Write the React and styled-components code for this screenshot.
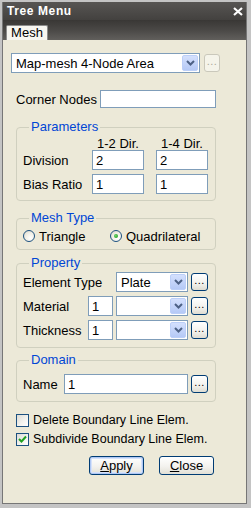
import React from 'react';
import styled, {createGlobalStyle} from "styled-components";

const GlobalStyle = createGlobalStyle`
  html, body {
    margin: 0;
    padding: 0;
    background: #c4c4c4;
  }
  body {
    font-family: "Liberation Sans", Arial, sans-serif;
    font-size: 13px;
    color: #000;
  }
`;

const Frame = styled.div `
  width: 251px;
  height: 508px;
  box-sizing: border-box;
  padding: 2px 4px 4px 2px;
  background: #c4c4c4;
  display: flex;
`;

const Window = styled.div `
  flex: 1;
  display: flex;
  flex-direction: column;
  border: 1px solid #767676;
  border-top: none;
`;

const TitleBar = styled.div `
  height: 18px;
  display: flex;
  align-items: center;
  justify-content: space-between;
  padding: 0 3px 0 4px;
  background: linear-gradient(180deg, #575553 0%, #43413f 100%);
  color: white;
  font-weight: bold;
  font-size: 12px;
  letter-spacing: 0.6px;
`;

const TabStrip = styled.div `
  height: 20px;
  display: flex;
  align-items: flex-end;
  padding-left: 3px;
  background: linear-gradient(180deg, #393735 0%, #4a4846 50%, #615f5c 100%);
`;

const Tab = styled.div `
  width: 42px;
  height: 15px;
  box-sizing: border-box;
  background: #f7f6f1;
  border: 1px solid #8c8c8c;
  border-bottom: none;
  border-radius: 2px 2px 0 0;
  font-size: 13px;
  line-height: 14px;
  text-align: center;
`;

const Body = styled.div `
  flex: 1;
  background: #ece9d8;
  padding: 13px 0 0 8px;
  display: flex;
  flex-direction: column;
`;

const Row = styled.div `
  display: flex;
  align-items: center;
  gap: ${p => p.$gap || 0}px;
`;

const Section = styled.div `
  width: 200px;
  margin-left: 5px;
  display: flex;
  flex-direction: column;
`;

const CornerRow = styled.div `
  margin-top: 17px;
  height: 18px;
  display: flex;
  align-items: center;
  justify-content: space-between;
`;

const Combo = styled.div `
  width: ${p => p.$w}px;
  height: 20px;
  box-sizing: border-box;
  border: 1px solid #7f9db9;
  background: white;
  padding: 1px;
  display: flex;
  align-items: center;
  justify-content: space-between;
`;

const ComboText = styled.span `
  padding-left: 3px;
  white-space: nowrap;
`;

const ArrowBox = styled.div `
  width: 16px;
  height: 16px;
  box-sizing: border-box;
  border: 1px solid #bccff8;
  border-radius: 2px;
  background: linear-gradient(180deg, #d4e0fd 0%, #b5c9f6 100%);
  display: flex;
  align-items: center;
  justify-content: center;
`;

const DotButton = styled.div `
  width: ${p => p.$w || 17}px;
  height: 18px;
  box-sizing: border-box;
  border: 1px solid ${p => p.$disabled ? '#cac8bb' : '#003c74'};
  border-radius: 3px;
  background: ${p => p.$disabled ? '#f5f4ea' : 'linear-gradient(180deg, #ffffff 0%, #f2f1ec 60%, #dedcd2 100%)'};
  color: ${p => p.$disabled ? '#aca899' : '#000'};
  font-size: 11px;
  line-height: 13px;
  text-align: center;
  letter-spacing: 0.5px;
`;

const Input = styled.input `
  width: ${p => p.$w}px;
  height: ${p => p.$h || 20}px;
  box-sizing: border-box;
  margin: 0;
  border: 1px solid #7f9db9;
  background: white;
  padding: 0 3px;
  font-family: "Liberation Sans", Arial, sans-serif;
  font-size: 13px;
  color: #000;
  outline: none;
`;

const Group = styled.fieldset `
  margin: ${p => p.$mt}px 0 0 0;
  padding: ${p => p.$pad};
  border: 1px solid #d0d0bf;
  border-radius: 4px;
  min-width: 0;
  width: 200px;
  box-sizing: border-box;
`;

const Legend = styled.legend `
  margin-left: 6px;
  padding: 0 2px;
  color: #0046d5;
  font-size: 13px;
  line-height: 14px;
`;

const ParamGrid = styled.div `
  display: grid;
  grid-template-columns: 57px 52px 52px;
  grid-template-rows: 11px 20px 20px;
  column-gap: 12px;
  row-gap: 4px;
  align-items: center;
`;

const ColHead = styled.div `
  margin-top: 2px;
  text-align: center;
  font-size: 13px;
  line-height: 14px;
  align-self: start;
  white-space: nowrap;
`;

const Label = styled.span `
  white-space: nowrap;
  grid-column: ${p => p.$span || 'auto'};
`;

const PropGrid = styled.div `
  display: grid;
  grid-template-columns: ${p => p.$cols};
  grid-auto-rows: 20px;
  column-gap: 3px;
  row-gap: 4px;
  align-items: center;
`;

const RadioItem = styled.label `
  width: ${p => p.$w ? p.$w + 'px' : 'auto'};
  height: 16px;
  display: flex;
  align-items: center;
  gap: 4px;
`;

const RadioCircle = styled.span `
  width: 12px;
  height: 12px;
  box-sizing: border-box;
  border: 1px solid #1c5180;
  border-radius: 50%;
  background: radial-gradient(circle at 65% 70%, #ffffff 0%, #f1efe6 50%, #d6d3c6 100%);
  display: flex;
  align-items: center;
  justify-content: center;

  &::after {
    content: "";
    display: ${p => p.$on ? 'block' : 'none'};
    width: 4px;
    height: 4px;
    border-radius: 50%;
    background: radial-gradient(circle at 40% 40%, #6fd36f 0%, #21a121 80%);
  }
`;

const CheckList = styled.div `
  margin-top: 10px;
  display: flex;
  flex-direction: column;
  gap: 3px;
`;

const CheckItem = styled.label `
  height: 16px;
  display: flex;
  align-items: center;
  gap: 4px;
  font-size: 12.5px;
  white-space: nowrap;
`;

const CheckBox = styled.span `
  width: 13px;
  height: 13px;
  box-sizing: border-box;
  border: 1px solid #1c5180;
  background: linear-gradient(135deg, #dcdbd5 0%, #f4f4f0 60%, #ffffff 100%);
  display: flex;
  align-items: center;
  justify-content: center;
`;

const ButtonRow = styled.div `
  margin-top: 9px;
  display: flex;
  justify-content: flex-end;
  gap: 15px;
  padding-right: 2px;
`;

const Button = styled.div `
  width: 55px;
  height: 19px;
  box-sizing: border-box;
  border: 1px solid #003c74;
  border-radius: 3px;
  background: linear-gradient(180deg, #ffffff 0%, #f3f2ee 55%, #e2e0d6 100%);
  box-shadow: ${p => p.$default ? 'inset 0 0 0 1px #b0c8f4, inset 0 0 0 2px #d6e2fa' : 'none'};
  font-size: 13px;
  line-height: 17px;
  text-align: center;
`;

const Chevron = () => (
    <svg width="9" height="6" viewBox="0 0 9 6">
        <path d="M1 1 L4.5 4.5 L8 1" fill="none" stroke="#4d6185" strokeWidth="2"/>
    </svg>
);

const Dropdown = ({w, text}) => (
    <Combo $w={w}>
        <ComboText>{text}</ComboText>
        <ArrowBox><Chevron/></ArrowBox>
    </Combo>
);

const CloseIcon = () => (
    <svg width="10" height="9" viewBox="0 0 10 9">
        <path d="M1 1 L9 8 M9 1 L1 8" stroke="#fff" strokeWidth="2.2"/>
    </svg>
);

const Check = () => (
    <svg width="9" height="8" viewBox="0 0 9 8">
        <path d="M1 4 L3.5 6.5 L8 1.5" fill="none" stroke="#21a121" strokeWidth="2"/>
    </svg>
);

const App = () => {
    return (
        <Frame>
            <GlobalStyle/>
            <Window>
                <TitleBar>
                    <span>Tree Menu</span>
                    <CloseIcon/>
                </TitleBar>
                <TabStrip>
                    <Tab>Mesh</Tab>
                </TabStrip>
                <Body>
                    <Row $gap={4}>
                        <Dropdown w={189} text="Map-mesh 4-Node Area"/>
                        <DotButton $disabled $w={16}>...</DotButton>
                    </Row>
                    <Section>
                        <CornerRow>
                            <span>Corner Nodes</span>
                            <Input $w={116} $h={18} defaultValue=""/>
                        </CornerRow>

                        <Group $mt={12} $pad="1px 0 6px 6px">
                            <Legend>Parameters</Legend>
                            <ParamGrid>
                                <span/>
                                <ColHead>1-2 Dir.</ColHead>
                                <ColHead>1-4 Dir.</ColHead>
                                <Label>Division</Label>
                                <Input $w={52} defaultValue="2"/>
                                <Input $w={52} defaultValue="2"/>
                                <Label>Bias Ratio</Label>
                                <Input $w={52} defaultValue="1"/>
                                <Input $w={52} defaultValue="1"/>
                            </ParamGrid>
                        </Group>

                        <Group $mt={10} $pad="3px 0 5px 6px">
                            <Legend>Mesh Type</Legend>
                            <Row>
                                <RadioItem $w={87}>
                                    <RadioCircle/>
                                    <span>Triangle</span>
                                </RadioItem>
                                <RadioItem>
                                    <RadioCircle $on/>
                                    <span>Quadrilateral</span>
                                </RadioItem>
                            </Row>
                        </Group>

                        <Group $mt={6} $pad="2px 0 7px 6px">
                            <Legend>Property</Legend>
                            <PropGrid $cols="62px 25px 72px 17px">
                                <Label $span="1 / 3">Element Type</Label>
                                <Dropdown w={72} text="Plate"/>
                                <DotButton>...</DotButton>
                                <Label>Material</Label>
                                <Input $w={25} defaultValue="1"/>
                                <Dropdown w={72} text=""/>
                                <DotButton>...</DotButton>
                                <Label>Thickness</Label>
                                <Input $w={25} defaultValue="1"/>
                                <Dropdown w={72} text=""/>
                                <DotButton>...</DotButton>
                            </PropGrid>
                        </Group>

                        <Group $mt={5} $pad="7px 0 7px 6px">
                            <Legend>Domain</Legend>
                            <PropGrid $cols="38px 124px 17px">
                                <Label>Name</Label>
                                <Input $w={124} defaultValue="1"/>
                                <DotButton>...</DotButton>
                            </PropGrid>
                        </Group>

                        <CheckList>
                            <CheckItem>
                                <CheckBox/>
                                <span>Delete Boundary Line Elem.</span>
                            </CheckItem>
                            <CheckItem>
                                <CheckBox><Check/></CheckBox>
                                <span>Subdivide Boundary Line Elem.</span>
                            </CheckItem>
                        </CheckList>

                        <ButtonRow>
                            <Button $default><u>A</u>pply</Button>
                            <Button><u>C</u>lose</Button>
                        </ButtonRow>
                    </Section>
                </Body>
            </Window>
        </Frame>
    );
};

export default App;
